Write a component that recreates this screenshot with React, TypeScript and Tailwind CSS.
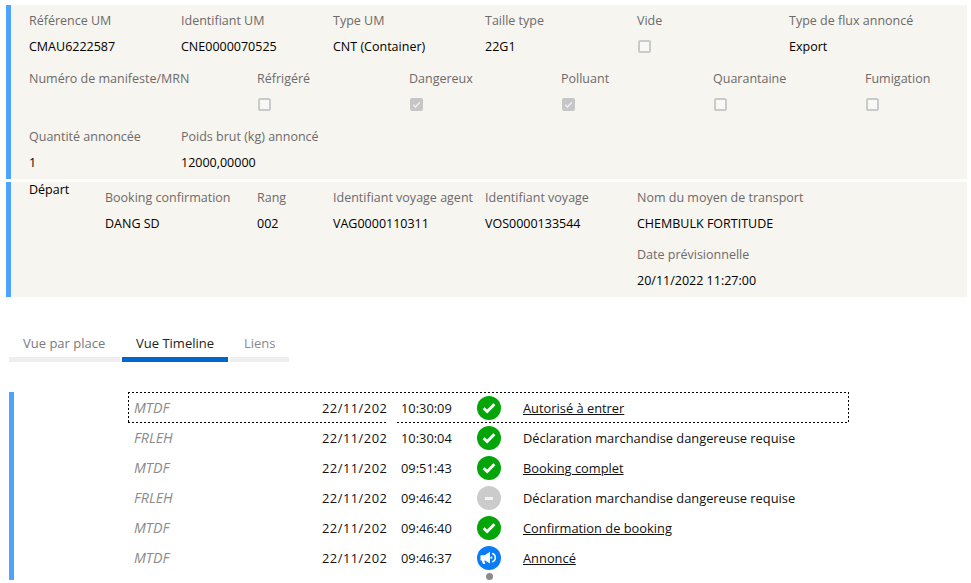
import React from "react";

function Box({ checked }: { checked?: boolean }) {
  return checked ? (
    <span className="flex h-[13px] w-[13px] items-center justify-center rounded-[2px] bg-[#c6c6c6]">
      <svg width="9" height="9" viewBox="0 0 9 9" fill="none">
        <path d="M1.2 4.8 3.4 7 7.8 2.2" stroke="#ececec" strokeWidth="1.6" />
      </svg>
    </span>
  ) : (
    <span className="block h-[13px] w-[13px] rounded-[2px] border-2 border-[#cacaca] bg-[#f8f8f6]" />
  );
}

function Field({ label, value, check, w = "w-[152px]" }: { label: string; value?: string; check?: "on" | "off"; w?: string }) {
  return (
    <div className={`${w} shrink-0`}>
      <div className="flex h-[26px] items-center whitespace-nowrap pt-[1px] text-[#6e6a6a]">{label}</div>
      <div className="flex h-[26px] items-center whitespace-nowrap text-black">
        {check ? <span className="ml-[1px]"><Box checked={check === "on"} /></span> : <span className="pt-[1px]">{value}</span>}
      </div>
    </div>
  );
}

function Status({ kind }: { kind: "ok" | "minus" | "info" }) {
  const bg = kind === "ok" ? "bg-[#05a50a]" : kind === "minus" ? "bg-[#cbcbcb]" : "bg-[#0a7cf5]";
  return (
    <span className={`flex h-[24px] w-[24px] items-center justify-center rounded-full ${bg}`}>
      {kind === "ok" && (
        <svg width="14" height="12" viewBox="0 0 14 12" fill="none">
          <path d="M1.6 6.2 5.2 9.6 12.4 2.2" stroke="#fff" strokeWidth="2.8" />
        </svg>
      )}
      {kind === "minus" && <span className="block h-[3px] w-[8px] bg-[#f4f4f4]" />}
      {kind === "info" && (
        <svg width="18" height="14" viewBox="0 0 18 14" fill="none">
          <path d="M0.5 4.2H4.6L10 0.8V12.6L5 9.4H4.2L5.4 13H3L1.8 9.4H0.5Z" fill="#fff" />
          <circle cx="11.4" cy="6.7" r="1.1" fill="#fff" />
          <path d="M12 2.6A4.2 4.2 0 0 1 12 10.8" stroke="#fff" strokeWidth="1.5" />
        </svg>
      )}
    </span>
  );
}

const rows: { place: string; time: string; kind: "ok" | "minus" | "info"; text: string; link?: boolean }[] = [
  { place: "MTDF", time: "10:30:09", kind: "ok", text: "Autorisé à entrer", link: true },
  { place: "FRLEH", time: "10:30:04", kind: "ok", text: "Déclaration marchandise dangereuse requise" },
  { place: "MTDF", time: "09:51:43", kind: "ok", text: "Booking complet", link: true },
  { place: "FRLEH", time: "09:46:42", kind: "minus", text: "Déclaration marchandise dangereuse requise" },
  { place: "MTDF", time: "09:46:40", kind: "ok", text: "Confirmation de booking", link: true },
  { place: "MTDF", time: "09:46:37", kind: "info", text: "Annoncé", link: true },
];

export default function App() {
  return (
    <div className="h-[583px] w-[971px] overflow-hidden bg-white pt-[5px] text-[12.5px] leading-[16px] [font-family:'Open_Sans','Noto_Sans',sans-serif]">
      <section className="ml-[6px] flex h-[174px] w-[961px] flex-col gap-[6px] border-l-[5px] border-[#4da3ff] bg-[#f6f5ef] pl-[18px] pt-[2px]">
        <div className="flex">
          <Field label="Référence UM" value="CMAU6222587" />
          <Field label="Identifiant UM" value="CNE0000070525" />
          <Field label="Type UM" value="CNT (Container)" />
          <Field label="Taille type" value="22G1" />
          <Field label="Vide" check="off" />
          <Field label="Type de flux annoncé" value="Export" />
        </div>
        <div className="flex">
          <Field label="Numéro de manifeste/MRN" w="w-[228px]" />
          <Field label="Réfrigéré" check="off" />
          <Field label="Dangereux" check="on" />
          <Field label="Polluant" check="on" />
          <Field label="Quarantaine" check="off" />
          <Field label="Fumigation" check="off" w="w-[80px]" />
        </div>
        <div className="flex">
          <Field label="Quantité annoncée" value="1" />
          <Field label="Poids brut (kg) annoncé" value="12000,00000" />
        </div>
      </section>

      <section className="ml-[6px] mt-[3px] flex h-[115px] w-[961px] border-l-[5px] border-[#4da3ff] bg-[#f6f5ef] pl-[18px]">
        <div className="w-[76px] shrink-0 text-black">Départ</div>
        <div className="flex pt-[2px]">
          <Field label="Booking confirmation" value="DANG SD" />
          <Field label="Rang" value="002" w="w-[76px]" />
          <Field label="Identifiant voyage agent" value="VAG0000110311" />
          <Field label="Identifiant voyage" value="VOS0000133544" />
          <div className="flex w-[180px] flex-col gap-[5px]">
            <Field label="Nom du moyen de transport" value="CHEMBULK FORTITUDE" />
            <Field label="Date prévisionnelle" value="20/11/2022 11:27:00" />
          </div>
        </div>
      </section>

      <nav className="ml-[9px] mt-[38px] flex gap-[2px] text-[13px]">
        <div className="h-[27px] w-[111px] border-b-[5px] border-[#eeeeee] pl-[14px] text-[#7a7a7a]">Vue par place</div>
        <div className="h-[27px] w-[106px] border-b-[5px] border-[#0066cc] pl-[14px] text-[#222]">Vue Timeline</div>
        <div className="h-[27px] w-[59px] border-b-[5px] border-[#eeeeee] pl-[14px] text-[#8a8a8a]">Liens</div>
      </nav>

      <section className="ml-[9px] mt-[30px] h-[188px] w-[840px] border-l-[5px] border-[#4da3ff] pl-[114px] pt-[1px] text-[12.85px]">
        {rows.map((r, i) => (
          <div key={i} className="relative flex h-[30px] w-[721px] items-center">
            <span className="w-[194px] pl-[6px] text-[14.2px] italic text-[#8a8a8a]">{r.place}</span>
            <span className="w-[79px] whitespace-nowrap tracking-[0.5px] text-[#111]">22/11/202</span>
            <span className="w-[76px] text-[#111]">{r.time}</span>
            <span className="flex w-[46px] justify-start"><Status kind={r.kind} /></span>
            <span className={`text-[#111] ${r.link ? "underline" : ""}`}>{r.text}</span>
            {i === 0 && (
              <>
                <span className="absolute left-0 right-0 -top-[1px] h-[1px] bg-[repeating-linear-gradient(90deg,#000_0,#000_2px,transparent_2px,transparent_4px)]" />
                <span className="absolute bottom-0 left-0 h-[1px] w-[259px] bg-[repeating-linear-gradient(90deg,#000_0,#000_2px,transparent_2px,transparent_4px)]" />
                <span className="absolute bottom-0 left-[269px] right-0 h-[1px] bg-[repeating-linear-gradient(90deg,#000_0,#000_2px,transparent_2px,transparent_4px)]" />
                <span className="absolute bottom-0 left-0 -top-[1px] w-[1px] bg-[repeating-linear-gradient(180deg,#000_0,#000_2px,transparent_2px,transparent_4px)]" />
                <span className="absolute bottom-0 right-0 -top-[1px] w-[1px] bg-[repeating-linear-gradient(180deg,#000_0,#000_2px,transparent_2px,transparent_4px)]" />
              </>
            )}
          </div>
        ))}
        <div className="ml-[358px] h-[7px] w-[7px] rounded-full bg-[#8a8a8a]" />
      </section>
    </div>
  );
}
